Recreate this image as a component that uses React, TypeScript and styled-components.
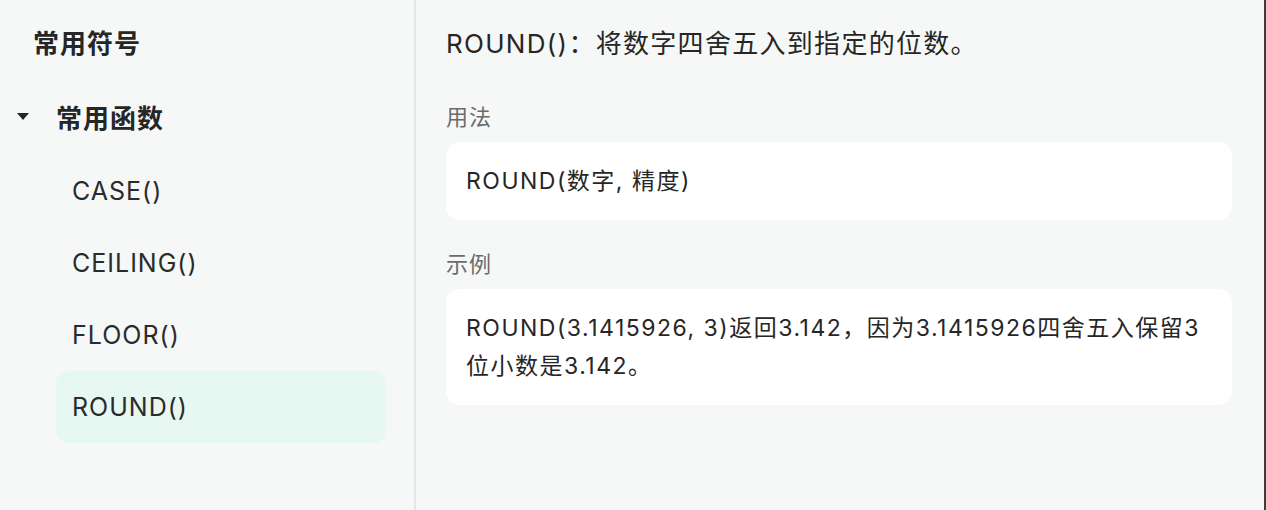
import React from 'react';
import styled, {createGlobalStyle} from 'styled-components';

const GlobalStyle = createGlobalStyle`
  html, body {
    margin: 0;
    padding: 0;
    height: 100%;
    background: #f6f8f8;
  }
  body {
    font-family: 'Inter', 'Noto Sans CJK SC', sans-serif;
    color: #2b2b2b;
  }
`;

const Page = styled.div`
  display: flex;
  height: 100vh;
  background: #f6f8f8;
  border-right: 2px solid #3d3d3d;
  box-sizing: border-box;
`;

const Sidebar = styled.div`
  width: 416px;
  flex-shrink: 0;
  box-sizing: border-box;
  padding: 8px 28px 0 0;
  border-right: 2px solid #e4e6e7;
  display: flex;
  flex-direction: column;
`;

const GroupRow = styled.div<{ $indent: number; $gap?: number }>`
  height: 72px;
  box-sizing: border-box;
  padding-bottom: 6px;
  margin-top: ${p => p.$gap || 0}px;
  display: flex;
  align-items: center;
  padding-left: ${p => p.$indent}px;
  font-size: 26px;
  font-weight: 700;
  letter-spacing: 1px;
  color: #262626;
`;

const Caret = styled.span`
  width: 0;
  height: 0;
  border-left: 6.5px solid transparent;
  border-right: 6.5px solid transparent;
  border-top: 7px solid #262626;
  margin-right: 27px;
`;

const Item = styled.div<{ $active?: boolean }>`
  height: 72px;
  margin-left: 56px;
  padding-left: 16px;
  display: flex;
  align-items: center;
  border-radius: 12px;
  font-size: 25px;
  letter-spacing: 1px;
  color: #2b2b2b;
  background: ${p => (p.$active ? '#e7f8f2' : 'transparent')};
`;

const Main = styled.div`
  flex: 1;
  padding: 8px 32px 0 30px;
  display: flex;
  flex-direction: column;
`;

const Title = styled.div`
  height: 72px;
  box-sizing: border-box;
  padding-bottom: 6px;
  display: flex;
  align-items: center;
  font-size: 26px;
  letter-spacing: 1.3px;
  color: #262626;
`;

const Label = styled.div<{ $gap: number }>`
  margin-top: ${p => p.$gap}px;
  line-height: 32px;
  font-size: 22px;
  letter-spacing: 1px;
  color: #6b6b6b;
`;

const Card = styled.div`
  margin-top: 9px;
  background: #ffffff;
  border-radius: 14px;
  padding: 20px 20px;
  font-size: 23px;
  letter-spacing: 1.5px;
  line-height: 38px;
  color: #262626;
`;

const functions = ['CASE()', 'CEILING()', 'FLOOR()', 'ROUND()'];

export default function App() {
    return (
        <>
            <GlobalStyle/>
            <Page>
                <Sidebar>
                    <GroupRow $indent={33}>常用符号</GroupRow>
                    <GroupRow $indent={17} $gap={3}><Caret/>常用函数</GroupRow>
                    {functions.map(f => (
                        <Item key={f} $active={f === 'ROUND()'}>{f}</Item>
                    ))}
                </Sidebar>
                <Main>
                    <Title>ROUND()：将数字四舍五入到指定的位数。</Title>
                    <Label $gap={21}>用法</Label>
                    <Card>ROUND(数字, 精度)</Card>
                    <Label $gap={28}>示例</Label>
                    <Card>ROUND(3.1415926, 3)返回3.142，因为3.1415926四舍五入保留3位小数是3.142。</Card>
                </Main>
            </Page>
        </>
    );
}
